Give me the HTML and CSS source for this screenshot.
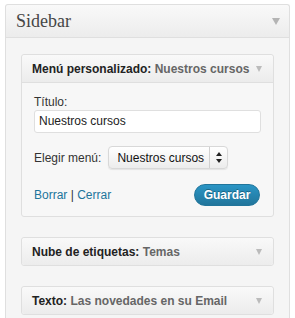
FILE: index.html
```html
<!DOCTYPE html>
<html>
<head>
    <title>Sidebar</title>
    <link rel="stylesheet" href="styles.css">
</head>
<body>
    <div class="sidebar">
        <div class="sidebar-head">
            <h3>Sidebar</h3>
            <span class="arrow"></span>
        </div>
        <div class="sidebar-body">
            <div class="widget open">
                <div class="widget-head">
                    <h4>Menú personalizado: <span class="in-title">Nuestros cursos</span></h4>
                    <span class="arrow small"></span>
                </div>
                <div class="widget-inside">
                    <label class="field-label">Título:</label>
                    <div class="text-input">Nuestros cursos</div>
                    <div class="select-row">
                        <span>Elegir menú:</span>
                        <div class="select">
                            <span class="select-value">Nuestros cursos</span>
                            <span class="select-arrows">
                                <svg width="6" height="11" viewBox="0 0 6 11"><path d="M3 0 L6 4 L0 4 Z M0 7 L6 7 L3 11 Z" fill="#222"/></svg>
                            </span>
                        </div>
                    </div>
                    <div class="widget-actions">
                        <div class="links"><a href="#">Borrar</a> | <a href="#">Cerrar</a></div>
                        <button class="save">Guardar</button>
                    </div>
                </div>
            </div>
            <div class="widget">
                <div class="widget-head">
                    <h4>Nube de etiquetas: <span class="in-title">Temas</span></h4>
                    <span class="arrow small"></span>
                </div>
            </div>
            <div class="widget">
                <div class="widget-head">
                    <h4>Texto: <span class="in-title">Las novedades en su Email</span></h4>
                    <span class="arrow small"></span>
                </div>
            </div>
        </div>
    </div>
</body>
</html>
```

FILE: styles.css
```css
body {
    margin: 0;
    padding: 0;
    background: #fff;
    font-family: "Liberation Sans", Arial, sans-serif;
    font-size: 12px;
    color: #333;
    overflow: hidden;
}

.sidebar {
    margin: 4px 5px 0 5px;
    border: 1px solid #dfdfdf;
    border-bottom: none;
    border-radius: 3px 3px 0 0;
    background: #f5f5f5;
    height: 314px;
    overflow: hidden;
}

.sidebar-head {
    display: flex;
    align-items: center;
    justify-content: space-between;
    height: 32px;
    padding: 0 9px 0 10px;
    background: linear-gradient(#f9f9f9, #ececec);
    border-bottom: 1px solid #dfdfdf;
    border-radius: 3px 3px 0 0;
}

.sidebar-head h3 {
    margin: 0;
    font-family: "Liberation Serif", "Times New Roman", serif;
    font-weight: normal;
    font-size: 18px;
    color: #464646;
}

.arrow {
    width: 0;
    height: 0;
    border-left: 4px solid transparent;
    border-right: 4px solid transparent;
    border-top: 7px solid #b4b4b4;
}

.arrow.small {
    border-left-width: 3px;
    border-right-width: 3px;
    border-top-width: 6px;
    border-top-color: #bbb;
}

.sidebar-body {
    padding: 16px 15px;
}

.widget {
    border: 1px solid #dfdfdf;
    border-radius: 3px;
    background: #f7f7f7;
    margin-bottom: 20px;
}

.widget-head {
    display: flex;
    align-items: center;
    justify-content: space-between;
    height: 27px;
    padding: 0 11px 0 10px;
    background: linear-gradient(#f9f9f9, #ececec);
    border-radius: 3px;
}

.widget.open .widget-head {
    border-bottom: 1px solid #dfdfdf;
    border-radius: 3px 3px 0 0;
}

.widget-head h4 {
    margin: 0;
    font-size: 12px;
    font-weight: bold;
    color: #222;
    white-space: nowrap;
}

.in-title {
    color: #666;
}

.widget-inside {
    padding: 11px 12px 10px 12px;
}

.field-label {
    display: block;
    line-height: 16px;
    color: #333;
}

.text-input {
    height: 21px;
    line-height: 21px;
    border: 1px solid #dfdfdf;
    border-radius: 3px;
    background: #fff;
    padding: 0 4px;
    color: #222;
}

.select-row {
    display: flex;
    align-items: center;
    gap: 7px;
    margin-top: 13px;
}

.select {
    display: flex;
    align-items: center;
    width: 118px;
    height: 21px;
    border: 1px solid #d8d8d8;
    border-radius: 4px;
    background: linear-gradient(#fff, #ececec);
    box-shadow: 0 1px 1px rgba(0, 0, 0, 0.08);
}

.select-value {
    flex: 1;
    padding-left: 8px;
    color: #111;
    white-space: nowrap;
}

.select-arrows {
    display: flex;
    align-items: center;
    justify-content: center;
    width: 17px;
    height: 100%;
    border-left: 1px solid #d0d0d0;
}

.widget-actions {
    display: flex;
    align-items: center;
    justify-content: space-between;
    margin-top: 15px;
    padding-right: 1px;
}

.links {
    color: #333;
}

.links a {
    color: #21759b;
    text-decoration: none;
}

.save {
    height: 22px;
    width: 66px;
    padding: 0;
    border: 1px solid #21759b;
    border-radius: 11px;
    background: linear-gradient(#2a95c5, #21759b);
    color: #fff;
    font-family: "Liberation Sans", Arial, sans-serif;
    font-size: 12px;
    font-weight: bold;
    text-shadow: 0 -1px 0 rgba(0, 0, 0, 0.3);
}
```
